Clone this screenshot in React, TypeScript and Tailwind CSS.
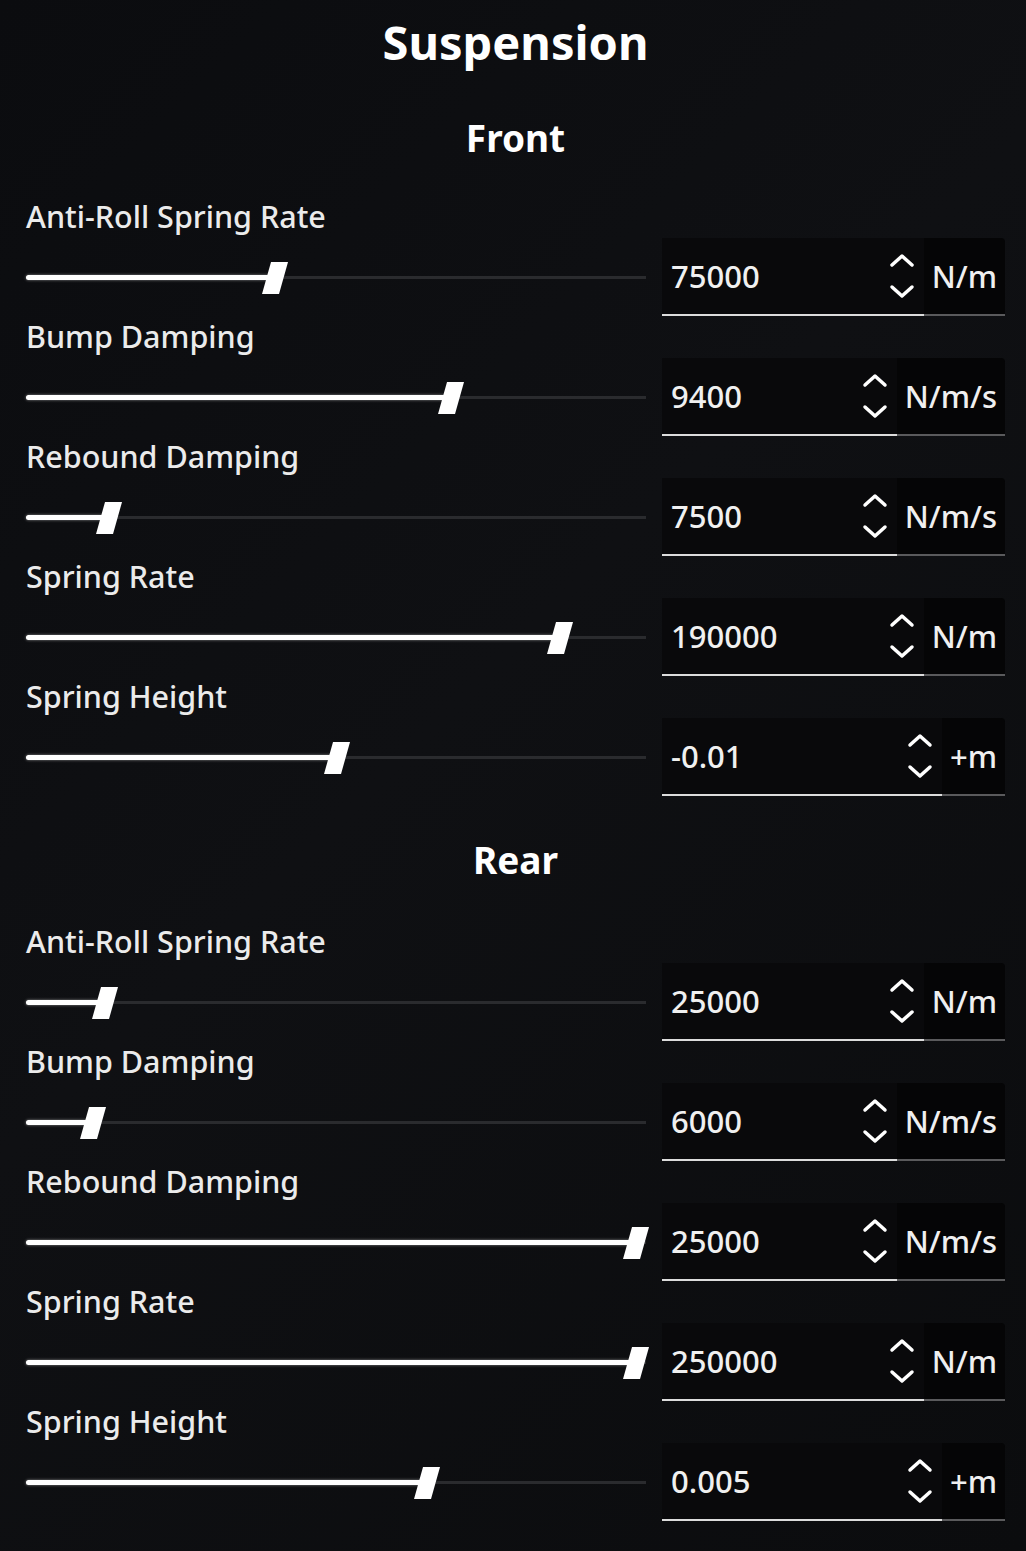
import React from "react";

type Row = { label: string; value: string; unit: string; f: number };

const front: Row[] = [
  { label: "Anti-Roll Spring Rate", value: "75000", unit: "N/m", f: 0.398 },
  { label: "Bump Damping", value: "9400", unit: "N/m/s", f: 0.692 },
  { label: "Rebound Damping", value: "7500", unit: "N/m/s", f: 0.122 },
  { label: "Spring Rate", value: "190000", unit: "N/m", f: 0.873 },
  { label: "Spring Height", value: "-0.01", unit: "+m", f: 0.502 },
];

const rear: Row[] = [
  { label: "Anti-Roll Spring Rate", value: "25000", unit: "N/m", f: 0.115 },
  { label: "Bump Damping", value: "6000", unit: "N/m/s", f: 0.095 },
  { label: "Rebound Damping", value: "25000", unit: "N/m/s", f: 1 },
  { label: "Spring Rate", value: "250000", unit: "N/m", f: 1 },
  { label: "Spring Height", value: "0.005", unit: "+m", f: 0.652 },
];

function Slider({ f }: { f: number }) {
  const pos = 10 + f * 600;
  return (
    <div className="relative h-[78px] w-[620px] shrink-0">
      <div className="absolute left-0 right-0 top-[38px] h-[3px] bg-[#2a2b2e]" />
      <div
        className="absolute left-0 top-[37px] h-[5px] rounded-full bg-white shadow-[0_0_3px_rgba(255,255,255,0.5)]"
        style={{ width: pos }}
      />
      <svg
        className="absolute top-[24px]"
        style={{ left: pos - 13 }}
        width="26"
        height="32"
        viewBox="0 0 26 32"
      >
        <polygon points="9,0 26,0 17,32 0,32" fill="white" />
      </svg>
    </div>
  );
}

function Spinner() {
  return (
    <svg width="26" height="50" viewBox="0 0 26 50" className="shrink-0">
      <polyline
        points="3,14 13,5 23,14"
        fill="none"
        stroke="white"
        strokeWidth="3.5"
        strokeLinecap="round"
        strokeLinejoin="round"
      />
      <polyline
        points="3,36 13,45 23,36"
        fill="none"
        stroke="white"
        strokeWidth="3.5"
        strokeLinecap="round"
        strokeLinejoin="round"
      />
    </svg>
  );
}

function Field({ row }: { row: Row }) {
  return (
    <div className="flex h-[78px] w-[343px] items-stretch">
      <div className="flex flex-1 items-center justify-between border-b-2 border-[#dcdcdc] bg-[#09090b] pl-[9px] pr-[9px]">
        <span className="text-[31px] font-medium text-[#f0f0f0]">{row.value}</span>
        <Spinner />
      </div>
      <div className="flex items-center rounded-tr-[4px] border-b-2 border-[#5a5a5c] bg-[#050506] px-[8px] text-[31px] font-medium text-[#f0f0f0]">
        {row.unit}
      </div>
    </div>
  );
}

function RowView({ row }: { row: Row }) {
  return (
    <div className="flex flex-col">
      <div className="flex h-[40px] items-center text-[30.5px] font-medium leading-none text-[#ebebeb]">
        {row.label}
      </div>
      <div className="mt-[2px] flex items-center justify-between">
        <Slider f={row.f} />
        <Field row={row} />
      </div>
    </div>
  );
}

export default function App() {
  return (
    <div
      className="min-h-[1551px] w-full bg-[#0d0e11] bg-[linear-gradient(135deg,#0b0c0f_0%,#0f1013_45%,#0b0c0e_100%)] px-[26px] pr-[21px] text-white"
      style={{ fontFamily: '"Noto Sans", "Open Sans", sans-serif' }}
    >
      <div className="flex h-[84px] items-center justify-center text-[47px] font-bold leading-none">
        Suspension
      </div>
      <div className="mt-[23px] flex h-[60px] items-center justify-center text-[37px] font-bold leading-none">
        Front
      </div>
      <div className="mt-[29px] flex flex-col">
        {front.map((r, i) => (
          <RowView key={i} row={r} />
        ))}
      </div>
      <div className="mt-[33px] flex h-[60px] items-center justify-center text-[37px] font-bold leading-none">
        Rear
      </div>
      <div className="mt-[32px] flex flex-col">
        {rear.map((r, i) => (
          <RowView key={i} row={r} />
        ))}
      </div>
    </div>
  );
}
